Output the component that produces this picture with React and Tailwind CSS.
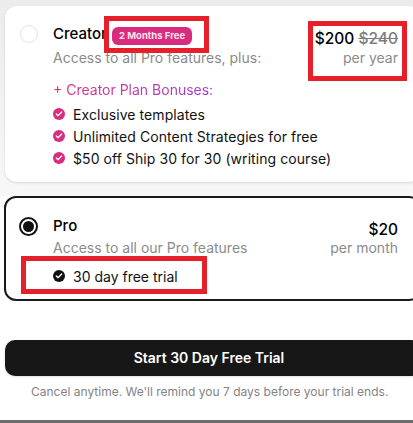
import { Check } from 'lucide-react';

const BONUSES = ['Exclusive templates', 'Unlimited Content Strategies for free', '$50 off Ship 30 for 30 (writing course)'];

function CheckDot({ color }) {
  return (
    <span className={`flex h-3 w-3 shrink-0 items-center justify-center rounded-full ${color}`}>
      <Check className="h-2 w-2 text-white" strokeWidth={4} />
    </span>
  );
}

export default function App() {
  return (
    <div className="relative h-[423px] w-[413px] overflow-hidden bg-white font-['Inter',sans-serif]">
      {/* top grey area with the Creator card */}
      <div className="bg-gradient-to-b from-[#ececec] to-[#f7f7f7] pb-[14px] pl-[5px] pt-[6px]">
        <div className="-mr-2 h-[176px] rounded-xl bg-white pl-[48px] pr-[23px] pt-[17px] shadow-sm">
          <div className="flex justify-between">
            <div>
              <div className="flex items-center">
                <span className="w-[52px] whitespace-nowrap text-[15px] font-medium leading-[20px] text-black">Creator</span>
                <span className="relative z-10 ml-[7px] mt-[4px] rounded-md bg-[#d92c7f] px-[7px] py-[2px] text-[9.5px] font-bold leading-[14px] text-[#fbe4ef]">2 Months Free</span>
              </div>
              <p className="mt-[3px] text-[14px] leading-[20px] text-[#8b8b8b]">Access to all Pro features, plus:</p>
            </div>
            <div className="mt-[6px] text-right">
              <div className="text-[15.5px] font-medium leading-[20px] text-black">$200 <span className="text-[#7d7d7d] line-through">$240</span></div>
              <div className="text-[14px] leading-[18px] text-[#8b8b8b]">per year</div>
            </div>
          </div>
          <p className="mt-[12px] w-fit bg-gradient-to-r from-[#db2d80] to-[#a03ac8] bg-clip-text text-[14px] leading-[20px] text-transparent">+ Creator Plan Bonuses:</p>
          <ul className="mt-[4px] flex flex-col gap-[2px]">
            {BONUSES.map((b) => (
              <li key={b} className="flex h-[20px] items-center gap-2 text-[14px] tracking-[0.07px] text-[#111]">
                <CheckDot color="bg-[#d92c7f]" />
                {b}
              </li>
            ))}
          </ul>
        </div>
      </div>

      {/* Pro card */}
      <div className="-mr-2 ml-[4px] h-[105px] rounded-xl border-2 border-[#1a1a1a] pl-[47px] pr-[21px] pt-[18px]">
        <div className="flex justify-between">
          <div>
            <div className="text-[15px] font-medium leading-[20px] text-black">Pro</div>
            <p className="mt-[2px] text-[14px] leading-[20px] text-[#8b8b8b]">Access to all our Pro features</p>
          </div>
          <div className="mt-[4px] text-right">
            <div className="text-[15.5px] font-medium leading-[20px] text-black">$20</div>
            <div className="text-[14px] leading-[16px] text-[#8b8b8b]">per month</div>
          </div>
        </div>
        <div className="mt-[8px] flex h-[20px] items-center gap-2 text-[14px] text-[#111]">
          <CheckDot color="bg-[#111]" />
          30 day free trial
        </div>
      </div>

      {/* Call to action */}
      <button className="-mr-2 ml-[5px] mt-[39px] block h-[36px] w-[416px] rounded-[10px] bg-[#171717] pb-[2px] pr-[8px] text-[14px] font-semibold text-white shadow-sm">
        Start 30 Day Free Trial
      </button>
      <p className="mt-[7px] pl-[31px] text-[12px] leading-[18px] text-[#838383]">Cancel anytime. We'll remind you 7 days before your trial ends.</p>

      <div className="absolute bottom-0 left-0 h-[3px] w-full bg-[#6b6b6b]" />

      {/* radios */}
      <span className="absolute left-[20px] top-[25px] h-[18px] w-[18px] rounded-full border border-[#e3e3e3] bg-white" />
      <span className="absolute left-[19px] top-[217px] flex h-[19px] w-[19px] items-center justify-center rounded-full border-2 border-[#111] bg-white">
        <span className="h-[11px] w-[11px] rounded-full bg-[#111]" />
      </span>

      {/* red annotation boxes */}
      <div className="absolute left-[104px] top-[16px] h-[37px] w-[105px] border-[5px] border-[#e6202a]" />
      <div className="absolute left-[308px] top-[21px] h-[60px] w-[99px] border-[5px] border-[#e6202a]" />
      <div className="absolute left-[21px] top-[256px] h-[38px] w-[186px] border-[5px] border-[#e6202a]" />
    </div>
  );
}
